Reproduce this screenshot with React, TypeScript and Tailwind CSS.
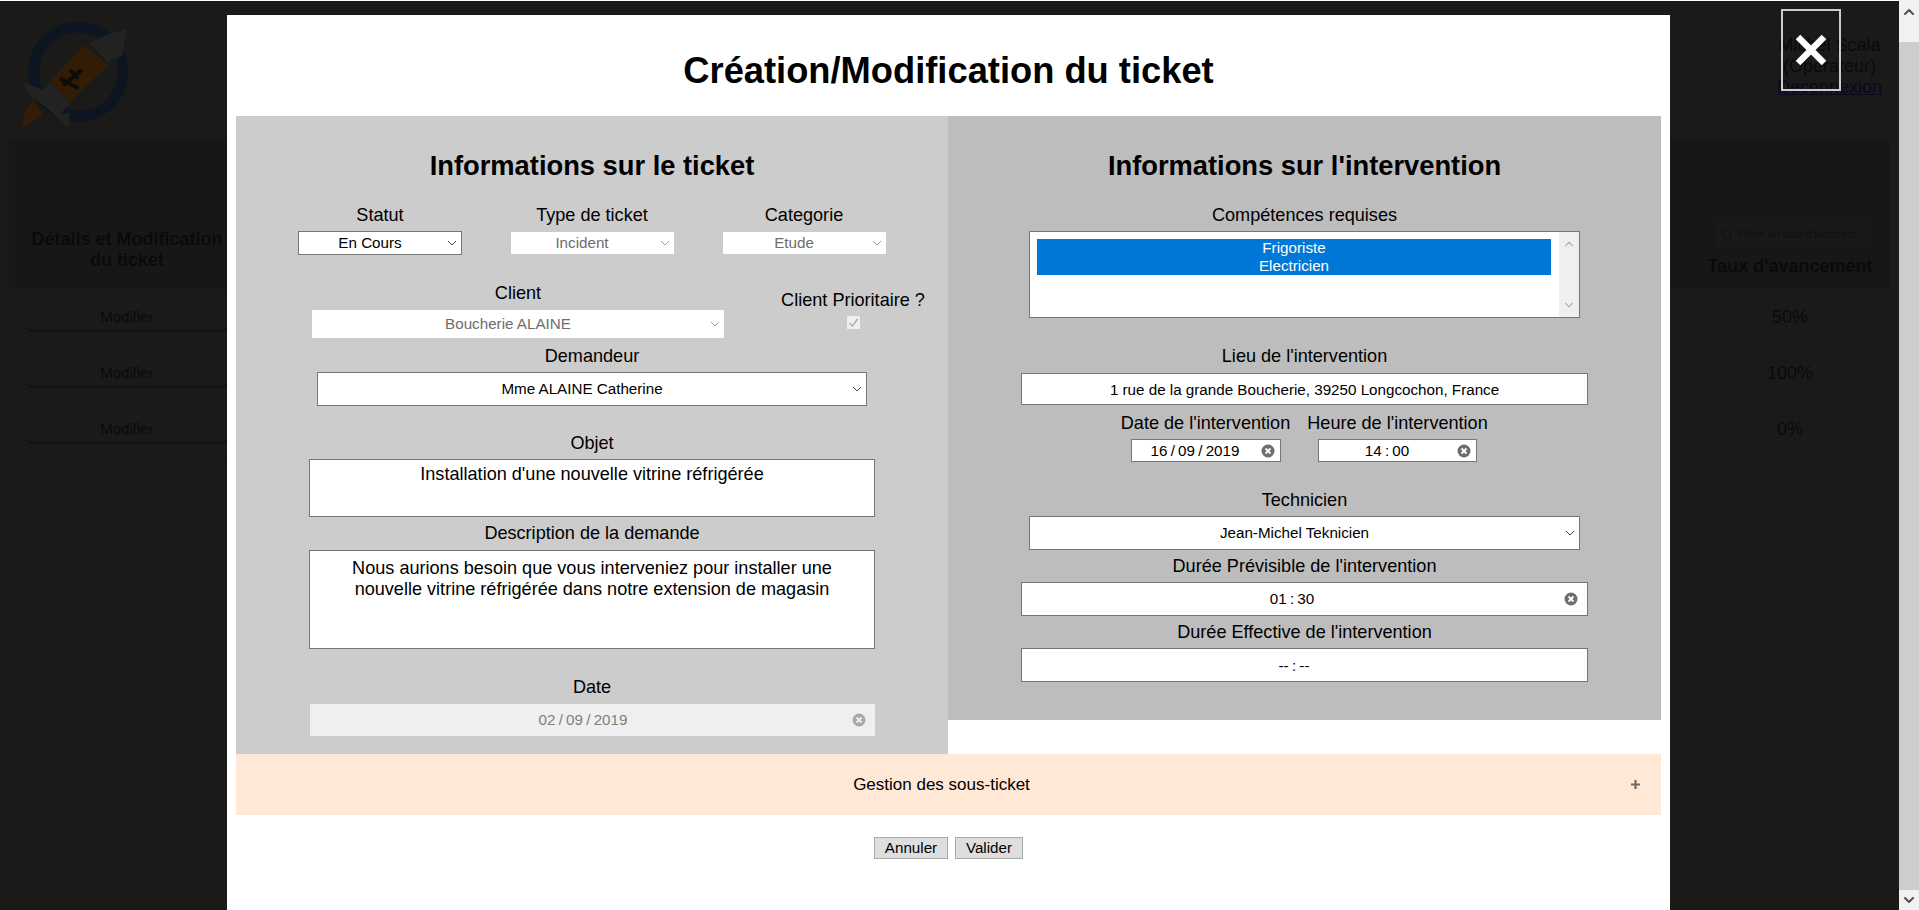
import React from 'react';
import { ChevronDown, ChevronUp, Search } from 'lucide-react';

const Clear = ({ muted }: { muted?: boolean }) => (
  <svg width="14" height="14" viewBox="0 0 14 14" className="shrink-0">
    <circle cx="7" cy="7" r="6.5" fill={muted ? '#a8a8a8' : '#6e6e6e'} />
    <path d="M4.5 4.5l5 5M9.5 4.5l-5 5" stroke={muted ? '#efefef' : '#fff'} strokeWidth="1.8" />
  </svg>
);

const Label = ({ children }: { children: React.ReactNode }) => (
  <div className="h-[20px] leading-[20px] text-[18.1px] text-black whitespace-nowrap text-center">{children}</div>
);

const Select = ({ value, className, disabled }: { value: string; className: string; disabled?: boolean }) => (
  <div className={`flex items-center bg-white text-[15.2px] ${disabled ? 'text-[#6d6d6d]' : 'text-black border border-[#767676]'} ${className}`}>
    <span className="flex-1 text-center whitespace-nowrap pt-px pr-[6px]">{value}</span>
    <svg width="10" height="6" viewBox="0 0 10 6" className={`mr-[4px] ${disabled ? 'text-[#a0a0a0]' : 'text-[#444]'}`}>
      <path d="M1 1l4 4 4-4" fill="none" stroke="currentColor" strokeWidth="1" />
    </svg>
  </div>
);

const TimeInput = ({ value, className, clear, wide }: { value: string; className: string; clear?: boolean; wide?: boolean }) => (
  <div className={`flex items-center bg-white border border-[#767676] text-[15.2px] text-black [word-spacing:-1px] ${className}`}>
    <span className="flex-1 text-center whitespace-nowrap pt-px">{value}</span>
    <span className={`w-[18px] flex justify-center ${wide ? 'mr-[7px]' : 'mr-[3px]'}`}>{clear && <Clear />}</span>
  </div>
);

const TableButton = () => (
  <div className="mx-[13px] mb-[26px] h-[30px] rounded-[12px] border border-[#1c1c1c] border-b-2 border-b-[#121212] text-center leading-[28px] text-[15px] text-[#0a0a0a]">
    Modifier
  </div>
);

// drawn in the coordinates of a 3x crop, hence the 390 box
const Logo = () => (
  <svg width="130" height="130" viewBox="0 0 390 390">
    <circle cx="205" cy="185" r="134" fill="none" stroke="#0c1520" strokeWidth="32" />
    <path d="M265 85l85-30-12 80-25 15z" fill="#222222" />
    <path d="M35 215l65 25-30 30z" fill="#222222" />
    <path d="M130 310h50l-5 45z" fill="#222222" />
    <path d="M70 260l50-40 65 60-45 40z" fill="#232323" />
    <path d="M240 100l25-15 55 45-25 30z" fill="#232323" />
    <path d="M118 215l107-110 70 60-115 110z" fill="#321c06" />
    <path d="M150 205l55 30M215 180l-55 45M180 180l25 25" stroke="#0c0c0c" strokeWidth="11" />
    <path d="M35 355l10-50 25-35 30 45z" fill="#321b07" />
  </svg>
);

export default function App() {
  return (
    <div className="relative flex h-[910px] overflow-hidden bg-white font-['Liberation_Sans',Arial,sans-serif]">
      {/* dimmed page behind the modal */}
      <div className="flex-1 mt-px bg-[#1a1a19] text-[#0a0a0a]">
        <div className="h-[139px] flex justify-between pl-[10px] pr-[17px] pt-[9px]">
          <Logo />
          <div className="text-[18px] leading-[21px] text-center pt-[25px]">
            <div>Michel Scala</div>
            <div>(Opérateur)</div>
            <div className="underline text-[#08081f]">Deconnexion</div>
          </div>
        </div>
        <div className="mx-[9px]">
          <div className="h-[149px] bg-[#161816] flex justify-between items-end pb-[12px]">
            <div className="w-[236px] text-center font-bold text-[18px] leading-[21px] pb-[6px]">
              Détails et Modification
              <br />
              du ticket
            </div>
            <div className="w-[200px] flex flex-col items-center">
              <div className="w-[150px] h-[26px] mb-[8px] bg-[#181a18] flex items-center pl-[6px] gap-[5px] text-[10.6px] text-[#0e0e0e]">
                <Search className="w-[12px] h-[12px]" />
                <span className="whitespace-nowrap">Filtrer un taux d'avancem</span>
              </div>
              <div className="font-bold text-[18px] leading-[21px]">Taux d'avancement</div>
            </div>
          </div>
          <div className="flex justify-between h-[169px] pt-[13px] border-b border-[#161616]">
            <div className="w-[236px]">
              <TableButton />
              <TableButton />
              <TableButton />
            </div>
            <div className="w-[200px] text-center text-[18px] pt-px">
              <div className="h-[56px] leading-[28px]">50%</div>
              <div className="h-[56px] leading-[28px]">100%</div>
              <div className="h-[56px] leading-[28px]">0%</div>
            </div>
          </div>
        </div>
      </div>

      {/* browser scrollbar */}
      <div className="w-[20px] flex flex-col bg-[#f1f1f1] text-[#505050]">
        <div className="h-[42px] pt-[4px] flex justify-center">
          <ChevronUp className="w-[16px] h-[16px]" strokeWidth={3} />
        </div>
        <div className="flex-1 bg-[#cdcdcd]" />
        <div className="h-[20px] flex items-center justify-center">
          <ChevronDown className="w-[16px] h-[16px]" strokeWidth={3} />
        </div>
      </div>

      {/* modal */}
      <div className="absolute left-[227px] top-[15px] w-[1443px] h-[895px] bg-white px-[9px] text-black">
        <h1 className="h-[101px] pt-[36px] text-center text-[36.3px] leading-[40px] font-bold">Création/Modification du ticket</h1>

        <div className="flex items-start">
          <div className="w-[712px] h-[638px] bg-[#cccccc] flex flex-col items-center pt-[33px]">
            <h2 className="h-[34px] text-[27.3px] leading-[34px] font-bold">Informations sur le ticket</h2>

            <div className="mt-[22px] flex w-[636px]">
              {[
                { label: 'Statut', value: 'En Cours' },
                { label: 'Type de ticket', value: 'Incident', disabled: true },
                { label: 'Categorie', value: 'Etude', disabled: true },
              ].map(f => (
                <div key={f.label} className="flex-1 flex flex-col items-center">
                  <Label>{f.label}</Label>
                  <Select value={f.value} disabled={f.disabled} className={f.disabled ? 'mt-[7px] w-[163px] h-[22px]' : 'mt-[6px] w-[164px] h-[24px]'} />
                </div>
              ))}
            </div>

            <div className="mt-[28px] flex w-full pl-[76px]">
              <div className="flex flex-col items-center w-[412px]">
                <Label>Client</Label>
                <Select value="Boucherie ALAINE" disabled className="mt-[7px] w-[412px] h-[28px]" />
              </div>
              <div className="ml-[54px] w-[150px] pt-[7px] flex flex-col items-center">
                <Label>Client Prioritaire ?</Label>
                <div className="mt-[6px] w-[13px] h-[13px] bg-[#efefef] flex items-center justify-center">
                  <svg width="11" height="11" viewBox="0 0 11 11">
                    <path d="M1.5 6l3 3 5-7" fill="none" stroke="#a8a8a8" strokeWidth="1.3" />
                  </svg>
                </div>
              </div>
            </div>

            <div className="mt-[8px]"><Label>Demandeur</Label></div>
            <Select value="Mme ALAINE Catherine" className="mt-[6px] w-[550px] h-[34px]" />

            <div className="mt-[27px]"><Label>Objet</Label></div>
            <div className="mt-[6px] w-[566px] h-[58px] bg-white border border-[#767676] pt-[4px] text-center text-[18.1px] leading-[21px]">
              Installation d'une nouvelle vitrine réfrigérée
            </div>

            <div className="mt-[6px]"><Label>Description de la demande</Label></div>
            <div className="mt-[7px] w-[566px] h-[99px] bg-white border border-[#767676] pt-[7px] px-[20px] text-center text-[18.1px] leading-[21px]">
              Nous aurions besoin que vous interveniez pour installer une nouvelle vitrine réfrigérée dans notre extension de magasin
            </div>

            <div className="mt-[28px]"><Label>Date</Label></div>
            <div className="mt-[7px] w-[565px] h-[32px] bg-[#efefef] flex items-center text-[15.2px] text-[#808080] [word-spacing:-1px] pl-[5px]">
              <span className="flex-1 text-center pt-px">02 / 09 / 2019</span>
              <span className="mr-[9px] flex"><Clear muted /></span>
            </div>
          </div>

          <div className="w-[713px] h-[604px] bg-[#bdbdbd] flex flex-col items-center pt-[33px]">
            <h2 className="h-[34px] text-[27.3px] leading-[34px] font-bold">Informations sur l'intervention</h2>

            <div className="mt-[22px]"><Label>Compétences requises</Label></div>
            <div className="mt-[6px] w-[551px] h-[87px] bg-white border border-[#767676] flex text-[15.2px] text-white">
              <div className="flex-1 pl-[7px] pr-[8px] pt-[7px]">
                <div className="bg-[#0078d7] text-center leading-[18px]">
                  <div>Frigoriste</div>
                  <div>Electricien</div>
                </div>
              </div>
              <div className="w-[20px] bg-[#efefef] flex flex-col justify-between items-center py-[5px] text-[#b5b5b5]">
                <ChevronUp className="w-[14px] h-[14px]" strokeWidth={2} />
                <ChevronDown className="w-[14px] h-[14px]" strokeWidth={2} />
              </div>
            </div>

            <div className="mt-[28px]"><Label>Lieu de l'intervention</Label></div>
            <div className="mt-[7px] w-[567px] h-[32px] bg-white border border-[#767676] text-center text-[15.2px] leading-[32px]">
              1 rue de la grande Boucherie, 39250 Longcochon, France
            </div>

            <div className="mt-[8px] flex pr-[6px]">
              <div className="w-[192px] flex flex-col items-center">
                <Label>Date de l'intervention</Label>
                <TimeInput value="16 / 09 / 2019" clear className="mt-[6px] w-[150px] h-[23px]" />
              </div>
              <div className="w-[192px] flex flex-col items-center">
                <Label>Heure de l'intervention</Label>
                <TimeInput value="14 : 00" clear className="mt-[6px] w-[159px] h-[23px]" />
              </div>
            </div>

            <div className="mt-[28px]"><Label>Technicien</Label></div>
            <Select value="Jean-Michel Teknicien" className="mt-[6px] w-[551px] h-[34px]" />

            <div className="mt-[6px]"><Label>Durée Prévisible de l'intervention</Label></div>
            <TimeInput value="01 : 30" clear wide className="mt-[6px] w-[567px] h-[34px]" />

            <div className="mt-[6px]"><Label>Durée Effective de l'intervention</Label></div>
            <TimeInput value="-- : --" className="mt-[6px] w-[567px] h-[34px] pt-[2px]" />
          </div>
        </div>

        <div className="h-[61px] bg-[#ffe8d6] flex items-center text-[17px] pl-[16px] pr-[21px]">
          <span className="flex-1 text-center">Gestion des sous-ticket</span>
          <svg width="9" height="9" viewBox="0 0 9 9">
            <path d="M4.5 0v9M0 4.5h9" stroke="#6f6a68" strokeWidth="2.2" />
          </svg>
        </div>

        <div className="mt-[22px] flex justify-center gap-[7px]">
          <div className="w-[74px] h-[22px] bg-[#dedede] border border-[#a9a9a9] text-center text-[15.2px] leading-[20px]">Annuler</div>
          <div className="w-[68px] h-[22px] bg-[#dedede] border border-[#a9a9a9] text-center text-[15.2px] leading-[20px]">Valider</div>
        </div>
      </div>

      {/* close button over the modal */}
      <div className="absolute left-[1781px] top-[9px] w-[60px] h-[82px] border-2 border-[#cccccc] flex items-center justify-center">
        <svg width="32" height="32" viewBox="0 0 32 32">
          <path d="M3 3l26 26M29 3L3 29" stroke="#ffffff" strokeWidth="6.5" />
        </svg>
      </div>
    </div>
  );
}
